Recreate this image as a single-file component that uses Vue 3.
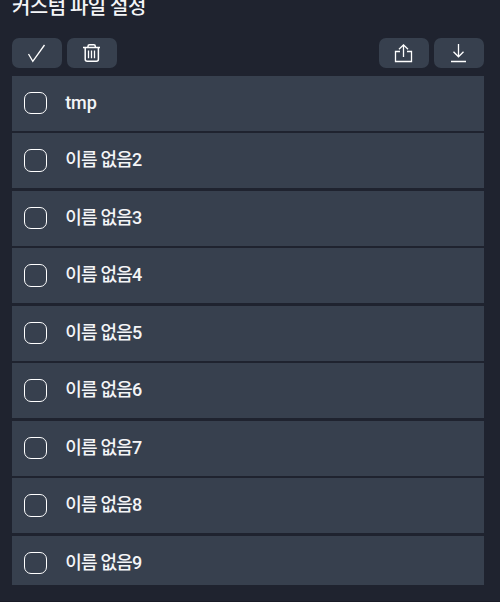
<script setup>
import { ref } from 'vue'

const files = ref(
  ['tmp', '이름 없음2', '이름 없음3', '이름 없음4', '이름 없음5', '이름 없음6', '이름 없음7', '이름 없음8', '이름 없음9']
    .map((name) => ({ name, checked: false }))
)
const isLatin = (name) => /^[\w .-]+$/.test(name)
const toggleAll = () => {
  const next = !files.value.every((f) => f.checked)
  files.value.forEach((f) => { f.checked = next })
}
</script>

<template>
  <main class="panel">
    <h1 class="title">커스텀 파일 설정</h1>
    <div class="toolbar">
      <div class="group">
        <button class="btn" @click="toggleAll">
          <svg width="50" height="30" viewBox="0 0 50 30"><path d="M16.5 16 20.8 23.3 32.5 7" /></svg>
        </button>
        <button class="btn">
          <svg width="50" height="30" viewBox="0 0 50 30">
            <path class="bold" d="M16 9.5H33M21 9.3V8.2Q21 6.7 22.5 6.7H26.8Q28.3 6.7 28.3 8.2V9.3M18.2 10V21.3Q18.2 23.3 20.2 23.3H29.4Q31.4 23.3 31.4 21.3V10" />
            <path d="M21.5 12.5V20.3M24.5 12.5V20.3M27.5 12.5V20.3" />
          </svg>
        </button>
      </div>
      <div class="group">
        <button class="btn">
          <svg width="50" height="30" viewBox="0 0 50 30"><path d="M21 13.5H16.5V23.5H32.5V13.5H28M24.5 19V7M20 11.3 24.5 6.8 29 11.3" /></svg>
        </button>
        <button class="btn">
          <svg width="50" height="30" viewBox="0 0 50 30"><path d="M24.5 6V18.7M19.5 13.8 24.5 18.8 29.5 13.8M17 23.5H32" /></svg>
        </button>
      </div>
    </div>
    <ul class="list">
      <li v-for="file in files" :key="file.name" class="row">
        <input v-model="file.checked" type="checkbox" class="check" />
        <span class="name" :class="{ latin: isLatin(file.name) }">{{ file.name }}</span>
      </li>
    </ul>
  </main>
</template>

<style>
body {
  background: #1f232f;
  overflow: hidden;
}
</style>

<style scoped>
.panel {
  box-sizing: border-box;
  height: 602px;
  padding: 0 16px 0 12px;
  overflow: hidden;
  border-bottom: 1px solid #191b26;
  color: #f4f5f7;
  font-family: Roboto, "Noto Sans CJK KR", sans-serif;
}
.title {
  height: 28px;
  margin: -7px 0 17px;
  font-size: 20px;
  font-weight: 500;
  line-height: 28px;
  letter-spacing: -0.55px;
  white-space: nowrap;
}
.toolbar {
  display: flex;
  justify-content: space-between;
  height: 30px;
  margin-bottom: 7.75px;
}
.group {
  display: flex;
  gap: 5px;
}
.btn {
  width: 50px;
  height: 30px;
  padding: 0;
  border: 0;
  border-radius: 7px;
  background: #37404e;
}
svg {
  display: block;
  fill: none;
  stroke: #fff;
  stroke-width: 1.3;
}
.bold {
  stroke-width: 1.5;
}
.list {
  display: flex;
  flex-direction: column;
  gap: 2.5px;
  height: 509px;
  margin: 0;
  padding: 0;
  overflow: hidden;
  list-style: none;
}
.row {
  display: flex;
  flex: none;
  align-items: center;
  box-sizing: border-box;
  height: 55px;
  padding-left: 12px;
  background: #37404e;
}
.check {
  appearance: none;
  box-sizing: border-box;
  width: 23px;
  height: 22.5px;
  margin: 0 18.2px 0.5px 0;
  border: 1px solid #fff;
  border-radius: 7px;
}
.check:checked {
  background: #fff;
}
.name {
  padding-bottom: 1px;
  font-size: 18px;
  font-weight: 500;
  line-height: 26px;
  letter-spacing: -0.8px;
}
.latin {
  letter-spacing: -0.1px;
}
</style>
